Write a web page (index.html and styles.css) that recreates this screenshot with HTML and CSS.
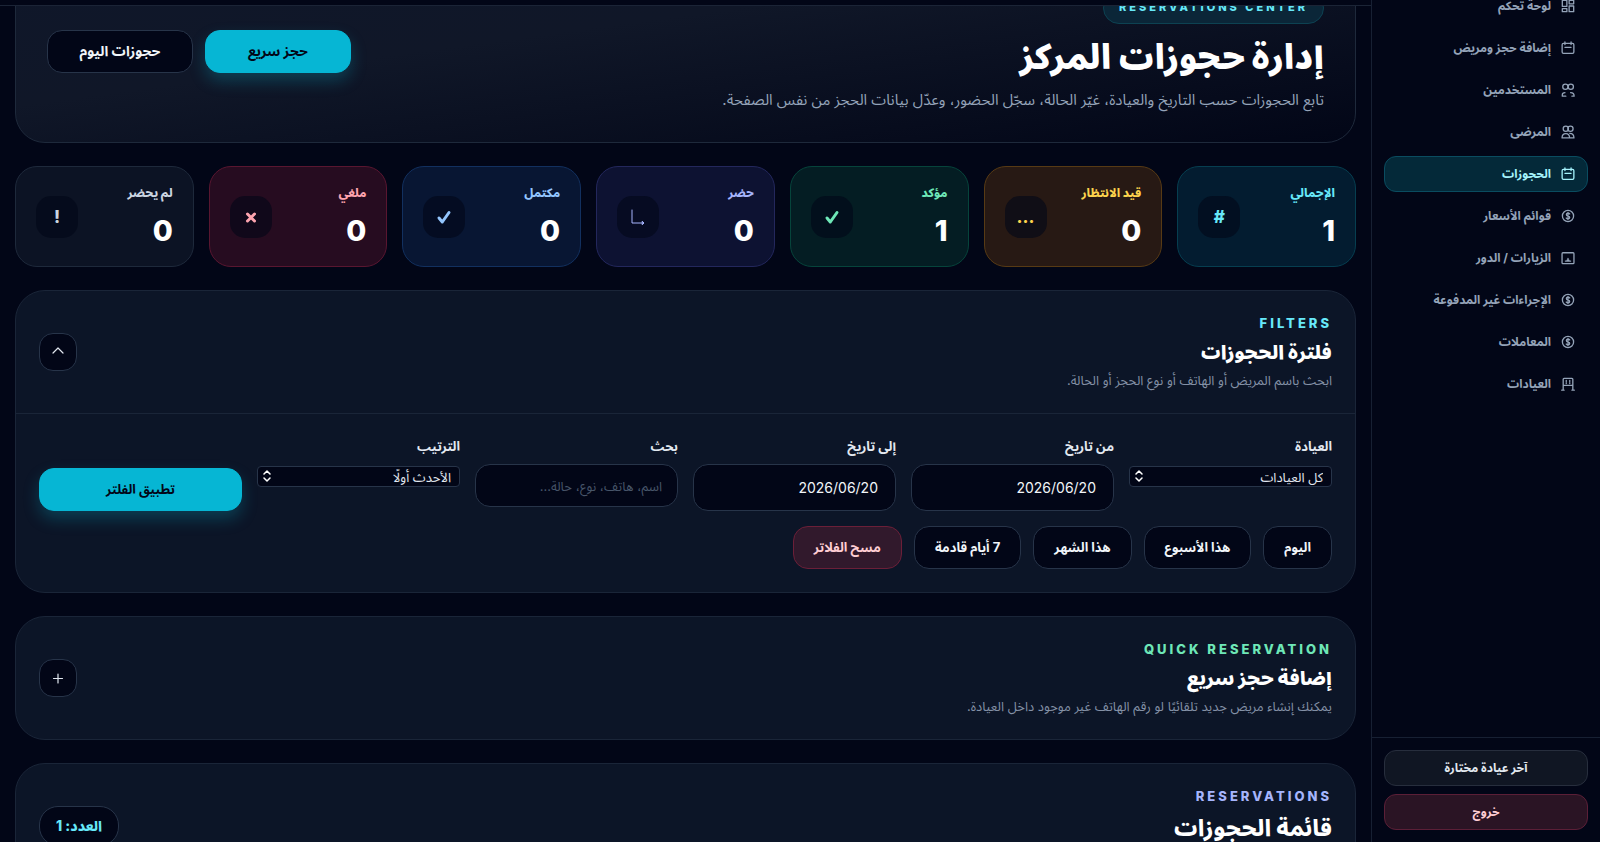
FILE: index.html
```html
<!DOCTYPE html>
<html lang="ar" dir="rtl">
<head>
    <meta charset="UTF-8">
    <meta name="viewport" content="width=device-width, initial-scale=1.0">
    <title>إدارة حجوزات المركز</title>
    <link rel="stylesheet" href="styles.css">
</head>
<body>
    <!-- رموز مشتركة -->
    <svg class="sprite" aria-hidden="true">
        <symbol id="i-grid" viewBox="0 0 16 16"><path d="M1.5 1.5h5.2v7H1.5zM9.3 1.5h5.2v4H9.3zM9.3 8h5.2v6.500H9.300zM1.500 11h5.200v3.500H1.500z"/></symbol>
        <symbol id="i-calendar" viewBox="0 0 16 16"><path d="M4.500 1v3M11.500 1v3M2.800 2.800h10.400q1.500 0 1.500 1.500v8.400q0 1.500-1.500 1.500H2.800q-1.500 0-1.500-1.500V4.300q0-1.500 1.500-1.500zM4.500 7.200h7"/></symbol>
        <symbol id="i-users" viewBox="0 0 16 16"><circle cx="5" cy="4.300" r="3"/><circle cx="11.200" cy="4.300" r="3"/><path d="M1.500 15v-1.500q0-2.500 3-2.500M5.500 15H1.500M11 11q4 0 4 4h-2.500"/></symbol>
        <symbol id="i-patients" viewBox="0 0 16 16"><circle cx="5.500" cy="4.300" r="3"/><circle cx="10.800" cy="4.300" r="3"/><path d="M1.200 14.800q0-5 4.300-5t4.300 5zM10 9.500q4.800 0 4.800 5.300H10"/></symbol>
        <symbol id="i-money" viewBox="0 0 16 16"><circle cx="8" cy="8" r="6.400"/><path d="M10 5.700q-.6-.9-2-.9-1.900 0-1.900 1.500T8 8t1.900 1.700T8 11.200q-1.400 0-2-.9M8 3.800v8.400"/></symbol>
        <symbol id="i-visits" viewBox="0 0 16 16"><rect x="1.200" y="2" width="13.600" height="12.500" rx="1"/><path d="M5 11.500h6M8 8.500v3M7 10.500h2"/></symbol>
        <symbol id="i-clinic" viewBox="0 0 16 16"><path d="M.8 15h2.700M12.500 15h2.700M2.500 15V2.500q0-1 1-1h9q1 0 1 1V15M3 9.500h10M6 4v1M10 4v1M6 6.500v1M10 6.500v1"/></symbol>
        <symbol id="i-check" viewBox="0 0 16 16"><path d="M3 9l3.300 4L13 3.500"/></symbol>
        <symbol id="i-arrows" viewBox="0 0 8 12"><path d="M1 4l3-3 3 3M1 8l3 3 3-3"/></symbol>
    </svg>

    <div class="app">
        <aside class="sidebar">
            <nav class="nav">
                <a href="#"><svg><use href="#i-grid"/></svg>لوحة تحكم</a>
                <a href="#"><svg><use href="#i-calendar"/></svg>إضافة حجز ومريض</a>
                <a href="#"><svg><use href="#i-users"/></svg>المستخدمين</a>
                <a href="#"><svg><use href="#i-patients"/></svg>المرضى</a>
                <a href="#" class="active"><svg><use href="#i-calendar"/></svg>الحجوزات</a>
                <a href="#"><svg><use href="#i-money"/></svg>قوائم الأسعار</a>
                <a href="#"><svg><use href="#i-visits"/></svg>الزيارات / الدور</a>
                <a href="#"><svg><use href="#i-money"/></svg>الإجراءات غير المدفوعة</a>
                <a href="#"><svg><use href="#i-money"/></svg>المعاملات</a>
                <a href="#"><svg><use href="#i-clinic"/></svg>العيادات</a>
            </nav>
            <div class="sidebar-footer">
                <button type="button">آخر عيادة مختارة</button>
                <button type="button" class="logout">خروج</button>
            </div>
        </aside>

        <div class="content">
            <header class="topbar"></header>
            <main class="page">
                <section class="hero">
                    <div class="hero-text">
                        <span class="hero-badge">RESERVATIONS CENTER</span>
                        <h1>إدارة حجوزات المركز</h1>
                        <p>تابع الحجوزات حسب التاريخ والعيادة، غيّر الحالة، سجّل الحضور، وعدّل بيانات الحجز من نفس الصفحة.</p>
                    </div>
                    <div class="hero-actions">
                        <button type="button" class="btn btn-primary">حجز سريع</button>
                        <button type="button" class="btn">حجوزات اليوم</button>
                    </div>
                </section>

                <section class="stats">
                    <div class="stat cyan">
                        <div><p>الإجمالي</p><strong>1</strong></div>
                        <span class="stat-icon">#</span>
                    </div>
                    <div class="stat amber">
                        <div><p>قيد الانتظار</p><strong>0</strong></div>
                        <span class="stat-icon">…</span>
                    </div>
                    <div class="stat green">
                        <div><p>مؤكد</p><strong>1</strong></div>
                        <span class="stat-icon"><svg class="thick"><use href="#i-check"/></svg></span>
                    </div>
                    <div class="stat indigo">
                        <div><p>حضر</p><strong>0</strong></div>
                        <span class="stat-icon"><svg viewBox="0 0 16 16"><path d="M2 1v13h11M12.500 12.500l1.500 1.500-1.500 1.500z"/></svg></span>
                    </div>
                    <div class="stat blue">
                        <div><p>مكتمل</p><strong>0</strong></div>
                        <span class="stat-icon"><svg class="thick"><use href="#i-check"/></svg></span>
                    </div>
                    <div class="stat rose">
                        <div><p>ملغي</p><strong>0</strong></div>
                        <span class="stat-icon"><svg class="thick" viewBox="0 0 16 16"><path d="M4.500 5l7 7M11.500 5l-7 7"/></svg></span>
                    </div>
                    <div class="stat slate">
                        <div><p>لم يحضر</p><strong>0</strong></div>
                        <span class="stat-icon">!</span>
                    </div>
                </section>

                <section class="card">
                    <div class="card-header">
                        <div>
                            <span class="eyebrow cyan-text">FILTERS</span>
                            <h2>فلترة الحجوزات</h2>
                            <p>ابحث باسم المريض أو الهاتف أو نوع الحجز أو الحالة.</p>
                        </div>
                        <button type="button" class="toggle" aria-label="إخفاء الفلاتر"><svg viewBox="0 0 14 14"><path d="M2 8l5-5 5 5"/></svg></button>
                    </div>
                    <form class="card-body">
                        <div class="fields">
                            <div class="field">
                                <label for="clinic">العيادة</label>
                                <div class="select-wrap">
                                    <select id="clinic"><option>كل العيادات</option></select>
                                    <svg><use href="#i-arrows"/></svg>
                                </div>
                            </div>
                            <div class="field">
                                <label for="from">من تاريخ</label>
                                <input type="text" class="date" id="from" value="2026/06/20">
                            </div>
                            <div class="field">
                                <label for="to">إلى تاريخ</label>
                                <input type="text" class="date" id="to" value="2026/06/20">
                            </div>
                            <div class="field">
                                <label for="search">بحث</label>
                                <input type="text" id="search" placeholder="اسم، هاتف، نوع، حالة...">
                            </div>
                            <div class="field">
                                <label for="sort">الترتيب</label>
                                <div class="select-wrap">
                                    <select id="sort"><option>الأحدث أولًا</option></select>
                                    <svg><use href="#i-arrows"/></svg>
                                </div>
                            </div>
                            <button type="button" class="btn btn-primary apply">تطبيق الفلتر</button>
                        </div>
                        <div class="chips">
                            <button type="button" class="btn">اليوم</button>
                            <button type="button" class="btn">هذا الأسبوع</button>
                            <button type="button" class="btn">هذا الشهر</button>
                            <button type="button" class="btn">7 أيام قادمة</button>
                            <button type="button" class="btn btn-danger">مسح الفلاتر</button>
                        </div>
                    </form>
                </section>

                <section class="card">
                    <div class="card-header">
                        <div>
                            <span class="eyebrow green-text">QUICK RESERVATION</span>
                            <h2>إضافة حجز سريع</h2>
                            <p>يمكنك إنشاء مريض جديد تلقائيًا لو رقم الهاتف غير موجود داخل العيادة.</p>
                        </div>
                        <button type="button" class="toggle" aria-label="إظهار النموذج"><svg viewBox="0 0 14 14"><path d="M7 3v9M2.500 7.500h9"/></svg></button>
                    </div>
                </section>

                <section class="card">
                    <div class="card-header">
                        <div>
                            <span class="eyebrow indigo-text">RESERVATIONS</span>
                            <h2 class="large">قائمة الحجوزات</h2>
                        </div>
                        <span class="count">العدد: 1</span>
                    </div>
                </section>
            </main>
        </div>
    </div>
</body>
</html>
```
FILE: styles.css
```css
* {
    box-sizing: border-box;
}
body {
    margin: 0;
    background-color: #020617;
    color: #fff;
    font-family: Inter, "Noto Sans Arabic", "DejaVu Sans", sans-serif;
    font-size: 13px;
}
h1, h2, p {
    margin: 0;
}
button, input, select {
    font-family: inherit;
}
button {
    cursor: pointer;
}
svg {
    fill: none;
    stroke: currentColor;
    stroke-width: 1.2;
    stroke-linecap: round;
    stroke-linejoin: round;
}
.sprite {
    display: none;
}
.app {
    display: flex;
    height: 100vh;
    overflow: hidden;
}

/* Sidebar */
.sidebar {
    width: 229px;
    flex-shrink: 0;
    display: flex;
    flex-direction: column;
    border-left: 1px solid #172033;
    background-color: #020617;
}
.nav {
    flex: 1;
    display: flex;
    flex-direction: column;
    gap: 6px;
    margin-top: -12px;
    padding: 0 12px;
}
.nav a {
    display: flex;
    align-items: center;
    gap: 10px;
    height: 36px;
    padding: 0 12px;
    border: 1px solid transparent;
    border-radius: 12px;
    color: #94a3b8;
    font-size: 12px;
    font-weight: 700;
    text-decoration: none;
}
.nav svg {
    width: 14px;
    height: 14px;
    stroke-width: 1.5;
}
.nav a.active {
    background-color: #042939;
    border-color: #0a4c60;
    color: #a5f3fc;
}
.sidebar-footer {
    display: flex;
    flex-direction: column;
    gap: 8px;
    padding: 12px;
    border-top: 1px solid #172033;
}
.sidebar-footer button {
    height: 36px;
    border: 1px solid #272e3d;
    border-radius: 12px;
    background-color: #101623;
    color: #e2e8f0;
    font-size: 12px;
    font-weight: 700;
}
.sidebar-footer .logout {
    background-color: #2a1424;
    border-color: #5b1f37;
    color: #fecdd3;
}

/* Page */
.content {
    flex: 1;
    min-width: 0;
    display: flex;
    flex-direction: column;
}
.topbar {
    height: 6px;
    flex-shrink: 0;
    border-bottom: 1px solid #1b2436;
}
.page {
    flex: 1;
    min-height: 0;
    overflow: hidden;
    padding: 0 15px;
}
.hero {
    display: flex;
    align-items: center;
    justify-content: space-between;
    margin-top: -46px;
    padding: 31px 31px 32px;
    border: 1px solid #1e293b;
    border-radius: 30px;
    background: linear-gradient(to bottom right, #0f172a, #101728 40%, #020617);
}
.hero-badge {
    display: block;
    width: fit-content;
    padding: 0 15px 2px;
    border: 1px solid #0d4252;
    border-radius: 16px;
    background-color: #0b2638;
    color: #67e8f9;
    font-size: 11px;
    font-weight: 800;
    line-height: 28px;
    letter-spacing: 3px;
}
.hero h1 {
    margin: 13px 0;
    font-size: 34px;
    font-weight: 900;
    line-height: 40px;
}
.hero p {
    color: #94a3b8;
    font-size: 15px;
    line-height: 20px;
}
.hero-actions {
    display: flex;
    gap: 12px;
}
.hero-actions .btn {
    width: 146px;
    font-size: 14px;
}
.btn {
    height: 43px;
    padding: 0 20px;
    border: 1px solid #273449;
    border-radius: 15px;
    background-color: #020617;
    color: #f1f5f9;
    font-size: 13px;
    font-weight: 700;
}
.btn-primary {
    border-color: #06b6d4;
    background-color: #06b6d4;
    color: #020617;
    box-shadow: 0 8px 16px rgba(6, 182, 212, 0.25);
}
.btn-danger {
    border-color: #6b1f38;
    background-color: #31192c;
    color: #fecdd3;
}

/* Stats */
.stats {
    display: grid;
    grid-template-columns: repeat(7, 1fr);
    gap: 15px;
    margin-top: 23px;
}
.stat {
    display: flex;
    align-items: center;
    justify-content: space-between;
    height: 101px;
    padding: 0 20px;
    border: 1px solid;
    border-radius: 22px;
}
.stat p {
    font-size: 12px;
    font-weight: 800;
    line-height: 16px;
    white-space: nowrap;
}
.stat strong {
    display: block;
    margin-top: 12px;
    color: #fff;
    font-size: 29px;
    font-weight: 800;
    line-height: 36px;
}
.stat-icon {
    display: flex;
    flex-shrink: 0;
    align-items: center;
    justify-content: center;
    width: 42px;
    height: 42px;
    border-radius: 15px;
    background-color: rgba(2, 6, 23, 0.6);
    font-size: 17px;
    font-weight: 800;
}
.stat-icon svg {
    width: 16px;
    height: 16px;
    stroke-width: 1;
}
.stat-icon .thick {
    stroke-width: 3;
}
.cyan { background-color: #031c30; border-color: #063e50; color: #67e8f9; }
.amber { background-color: #271914; border-color: #573a14; color: #fcd34d; }
.green { background-color: #041d23; border-color: #06443b; color: #6ee7b7; }
.indigo { background-color: #0d1232; border-color: #23275c; color: #a5b4fc; }
.blue { background-color: #081633; border-color: #12305f; color: #93c5fd; }
.rose { background-color: #260c20; border-color: #591630; color: #fda4af; }
.slate { background-color: #0c1324; border-color: #1e293b; color: #cbd5e1; }

/* Cards */
.card {
    margin-top: 23px;
    border: 1px solid #1a2538;
    border-radius: 30px;
    background-color: #0c1527;
}
.card-header {
    display: flex;
    align-items: center;
    justify-content: space-between;
    padding: 23px;
}
.eyebrow {
    display: block;
    font-size: 13px;
    font-weight: 800;
    line-height: 18px;
    letter-spacing: 3px;
}
.cyan-text { color: #67e8f9; }
.green-text { color: #6ee7b7; }
.indigo-text { color: #a5b4fc; }
.card h2 {
    margin: 7px 0 3px;
    font-size: 19px;
    font-weight: 900;
    line-height: 28px;
}
.card h2.large {
    margin-bottom: 20px;
    font-size: 23px;
    font-weight: 800;
    line-height: 32px;
}
.card-header p {
    color: #8491a6;
    font-size: 13px;
    line-height: 20px;
}
.toggle {
    display: flex;
    align-items: center;
    justify-content: center;
    width: 38px;
    height: 38px;
    padding: 0;
    border: 1px solid #273449;
    border-radius: 14px;
    background-color: #020617;
    color: #e2e8f0;
}
.toggle svg {
    width: 14px;
    height: 14px;
}
.count {
    padding: 0 16px;
    border: 1px solid #273449;
    border-radius: 19px;
    background-color: #020617;
    color: #67e8f9;
    font-size: 14px;
    font-weight: 800;
    line-height: 38px;
}

/* Filters */
.card-body {
    padding: 23px;
    border-top: 1px solid #1a2538;
}
.fields {
    display: grid;
    grid-template-columns: repeat(6, 1fr);
    gap: 15px;
}
.field label {
    display: block;
    margin-bottom: 8px;
    color: #e2e8f0;
    font-size: 13px;
    font-weight: 700;
    line-height: 19px;
}
.field input {
    display: block;
    width: 100%;
    height: 43px;
    padding: 0 15px;
    border: 1px solid #273449;
    border-radius: 15px;
    background-color: #020617;
    color: #f1f5f9;
    font-size: 13px;
}
.field input::placeholder {
    color: #475569;
    opacity: 1;
}
.field .date {
    height: 47px;
    padding: 0 17px;
    font-size: 14px;
}
.select-wrap {
    position: relative;
    padding-top: 2px;
}
.select-wrap select {
    display: block;
    appearance: none;
    width: 100%;
    height: 21px;
    padding: 0 8px;
    border: 1px solid #273449;
    border-radius: 4px;
    background-color: #020617;
    color: #e2e8f0;
    font-size: 13px;
    line-height: 16px;
}
.select-wrap svg {
    position: absolute;
    left: 6px;
    bottom: 5px;
    width: 8px;
    height: 12px;
    stroke-width: 1.5;
    pointer-events: none;
}
.apply {
    align-self: end;
}
.chips {
    display: flex;
    flex-wrap: wrap;
    gap: 12px;
    margin-top: 15px;
}
```
